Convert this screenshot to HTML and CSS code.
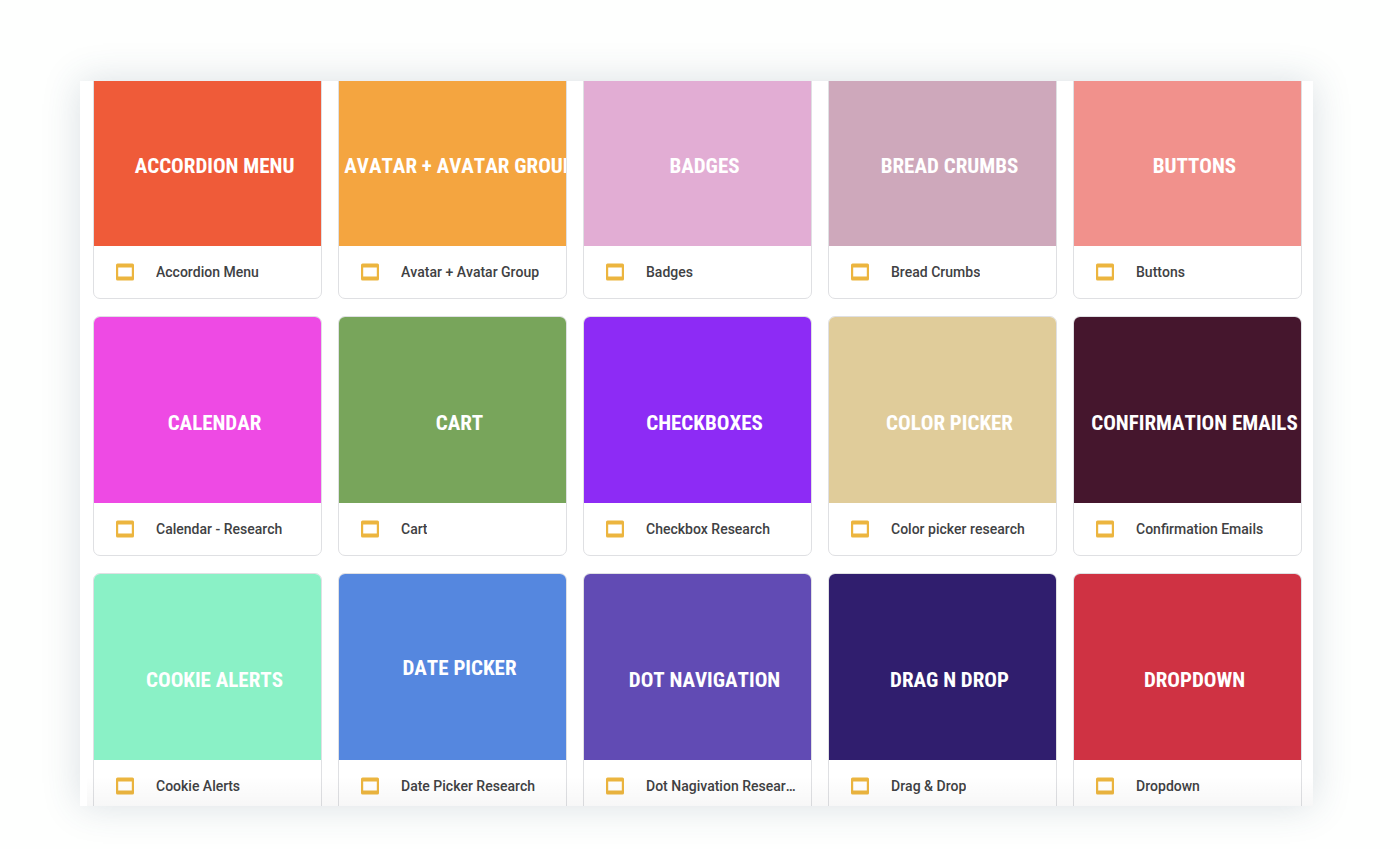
FILE: index.html
```html
<!DOCTYPE html>
<html lang="en">
<head>
<meta charset="utf-8">
<title>Component research</title>
<link rel="stylesheet" href="styles.css">
</head>
<body>
<svg class="defs" aria-hidden="true"><symbol id="slides" viewBox="0 0 18 18"><path fill="#ecb53f" fill-rule="evenodd" d="M1.500 .5h15a1.500 1.500 0 0 1 1.500 1.500v14a1.500 1.500 0 0 1-1.500 1.500h-15A1.500 1.500 0 0 1 0 16V2A1.500 1.500 0 0 1 1.500 .5zm.7 4v9h13.600v-9z"/></symbol></svg>
<main class="panel">
<div class="grid">
<a class="card" href="#"><span class="thumb orange-red">ACCORDION MENU</span><span class="file"><svg class="icon"><use href="#slides"/></svg><span class="name">Accordion Menu</span></span></a>
<a class="card" href="#"><span class="thumb orange">AVATAR + AVATAR GROUP</span><span class="file"><svg class="icon"><use href="#slides"/></svg><span class="name">Avatar + Avatar Group</span></span></a>
<a class="card" href="#"><span class="thumb pink">BADGES</span><span class="file"><svg class="icon"><use href="#slides"/></svg><span class="name">Badges</span></span></a>
<a class="card" href="#"><span class="thumb mauve">BREAD CRUMBS</span><span class="file"><svg class="icon"><use href="#slides"/></svg><span class="name">Bread Crumbs</span></span></a>
<a class="card" href="#"><span class="thumb salmon">BUTTONS</span><span class="file"><svg class="icon"><use href="#slides"/></svg><span class="name">Buttons</span></span></a>
<a class="card" href="#"><span class="thumb magenta">CALENDAR</span><span class="file"><svg class="icon"><use href="#slides"/></svg><span class="name">Calendar - Research</span></span></a>
<a class="card" href="#"><span class="thumb green">CART</span><span class="file"><svg class="icon"><use href="#slides"/></svg><span class="name">Cart</span></span></a>
<a class="card" href="#"><span class="thumb violet">CHECKBOXES</span><span class="file"><svg class="icon"><use href="#slides"/></svg><span class="name">Checkbox Research</span></span></a>
<a class="card" href="#"><span class="thumb sand">COLOR PICKER</span><span class="file"><svg class="icon"><use href="#slides"/></svg><span class="name">Color picker research</span></span></a>
<a class="card" href="#"><span class="thumb plum">CONFIRMATION EMAILS</span><span class="file"><svg class="icon"><use href="#slides"/></svg><span class="name">Confirmation Emails</span></span></a>
<a class="card" href="#"><span class="thumb mint">COOKIE ALERTS</span><span class="file"><svg class="icon"><use href="#slides"/></svg><span class="name">Cookie Alerts</span></span></a>
<a class="card" href="#"><span class="thumb blue centered">DATE PICKER</span><span class="file"><svg class="icon"><use href="#slides"/></svg><span class="name">Date Picker Research</span></span></a>
<a class="card" href="#"><span class="thumb purple">DOT NAVIGATION</span><span class="file"><svg class="icon"><use href="#slides"/></svg><span class="name">Dot Nagivation Research</span></span></a>
<a class="card" href="#"><span class="thumb indigo">DRAG N DROP</span><span class="file"><svg class="icon"><use href="#slides"/></svg><span class="name">Drag &amp; Drop</span></span></a>
<a class="card" href="#"><span class="thumb red">DROPDOWN</span><span class="file"><svg class="icon"><use href="#slides"/></svg><span class="name">Dropdown</span></span></a>
</div>
</main>
</body>
</html>
```

FILE: styles.css
```css
* { box-sizing: border-box; }
body {
  margin: 0;
  height: 100vh;
  padding: 81px 87px 43px 80px;
  display: flex;
  background: #fefffe;
  font-family: Roboto, "Liberation Sans", sans-serif;
}
.defs { position: absolute; width: 0; height: 0; }
.panel {
  position: relative;
  flex: 1;
  min-width: 0;
  overflow: hidden;
  background: #fff;
  box-shadow: 0 0 36px rgba(50, 75, 105, 0.18);
}
.panel::after {
  content: "";
  position: absolute;
  inset: auto 0 0 7px;
  height: 30px;
  background: linear-gradient(rgba(0, 0, 0, 0), rgba(0, 0, 0, 0.03));
  pointer-events: none;
}
.grid {
  display: grid;
  grid-template-columns: repeat(5, minmax(0, 1fr));
  gap: 17px 16px;
  margin-top: -22px;
  padding: 0 11px 0 13px;
}
.card {
  display: flex;
  flex-direction: column;
  overflow: hidden;
  border: 1px solid #dfe0e3;
  border-radius: 7px;
  background: #fff;
  color: #404143;
  text-decoration: none;
}
.thumb {
  display: flex;
  align-items: center;
  justify-content: center;
  height: 186px;
  padding: 26px 0 0 14px;
  overflow: hidden;
  color: #fff;
  font: 700 21px/24px "Roboto Condensed", Roboto, sans-serif;
  font-kerning: none;
  white-space: nowrap;
}
.centered { padding-top: 2px; }
.file {
  display: flex;
  align-items: center;
  gap: 22px;
  height: 52px;
  padding: 0 12px 0 22px;
}
.icon { flex: none; width: 18px; height: 18px; }
.name {
  min-width: 0;
  overflow: hidden;
  font-size: 14px;
  font-weight: 500;
  line-height: 20px;
  font-kerning: none;
  text-overflow: ellipsis;
  white-space: nowrap;
}
.orange-red { background: #ef5b39; }
.orange { background: #f4a540; }
.pink { background: #e2add4; }
.mauve { background: #cea8bb; }
.salmon { background: #f1918c; }
.magenta { background: #ee4ae4; }
.green { background: #78a55b; }
.violet { background: #8d2bf5; }
.sand { background: #e0cc9a; }
.plum { background: #45162d; }
.mint { background: #8af1c6; }
.blue { background: #5587df; }
.purple { background: #614bb4; }
.indigo { background: #301e6e; }
.red { background: #cf3243; }
```
